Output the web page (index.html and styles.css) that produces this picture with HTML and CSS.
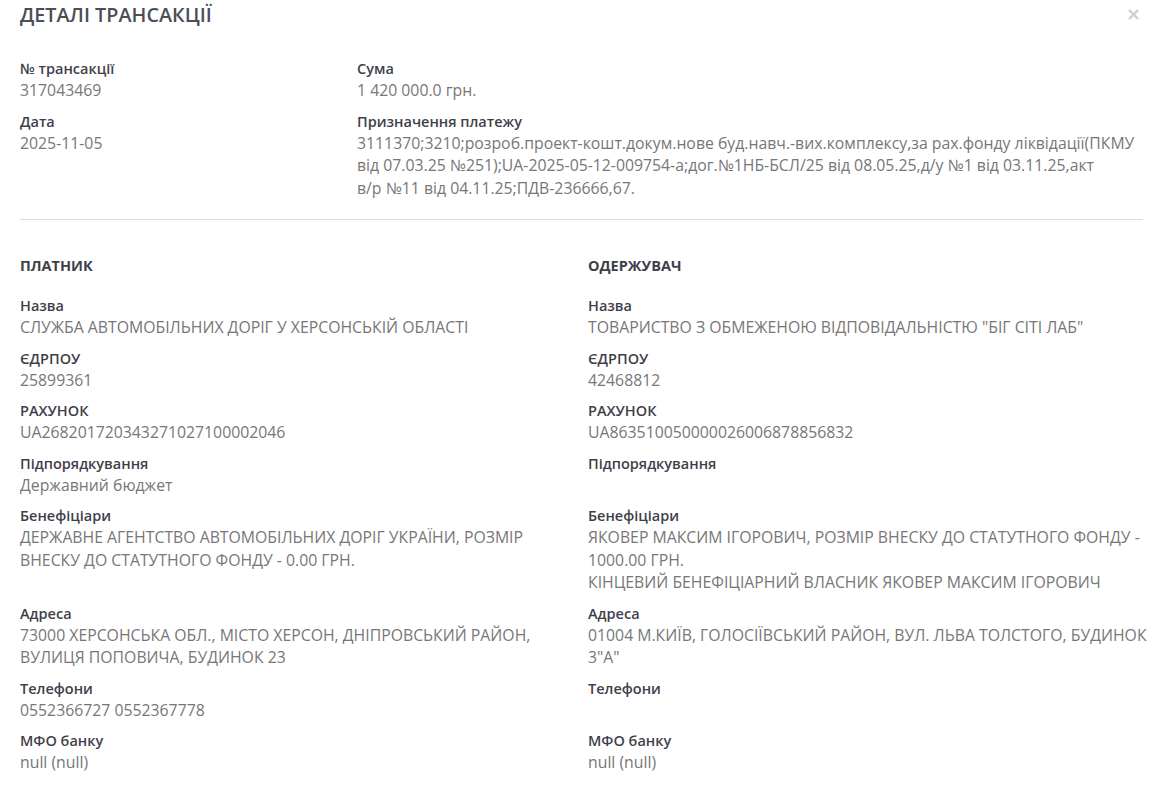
FILE: index.html
```html
<!DOCTYPE html>
<html lang="uk">
  <head>
    <meta charset="UTF-8" />
    <title>Деталі трансакції</title>
    <link rel="stylesheet" href="styles.css">
  </head>
  <body>
    <div class="modal">
      <div class="modal-header">
        <h2>Деталі трансакції</h2>
        <button class="close" type="button">&times;</button>
      </div>

      <!-- main info -->
      <div class="summary">
        <div class="col">
          <div class="field">
            <div class="label">№ трансакції</div>
            <div class="value">317043469</div>
          </div>
          <div class="field">
            <div class="label">Дата</div>
            <div class="value">2025-11-05</div>
          </div>
        </div>
        <div class="col">
          <div class="field">
            <div class="label">Сума</div>
            <div class="value">1 420 000.0 грн.</div>
          </div>
          <div class="field">
            <div class="label">Призначення платежу</div>
            <div class="value">3111370;3210;розроб.проект-кошт.докум.нове буд.навч.-вих.комплексу,за рах.фонду ліквідації(ПКМУ від 07.03.25 №251);UA-2025-05-12-009754-a;дог.№1НБ-БСЛ/25 від 08.05.25,д/у №1 від 03.11.25,акт<br>в/р №11 від 04.11.25;ПДВ-236666,67.</div>
          </div>
        </div>
      </div>

      <hr class="divider">

      <!-- payer / recipient, row by row -->
      <div class="parties">
        <h3 class="party-title">Платник</h3>
        <h3 class="party-title">Одержувач</h3>

        <div class="field">
          <div class="label">Назва</div>
          <div class="value">СЛУЖБА АВТОМОБІЛЬНИХ ДОРІГ У ХЕРСОНСЬКІЙ ОБЛАСТІ</div>
        </div>
        <div class="field">
          <div class="label">Назва</div>
          <div class="value">ТОВАРИСТВО З ОБМЕЖЕНОЮ ВІДПОВІДАЛЬНІСТЮ "БІГ СІТІ ЛАБ"</div>
        </div>

        <div class="field">
          <div class="label">ЄДРПОУ</div>
          <div class="value">25899361</div>
        </div>
        <div class="field">
          <div class="label">ЄДРПОУ</div>
          <div class="value">42468812</div>
        </div>

        <div class="field">
          <div class="label">РАХУНОК</div>
          <div class="value">UA268201720343271027100002046</div>
        </div>
        <div class="field">
          <div class="label">РАХУНОК</div>
          <div class="value">UA863510050000026006878856832</div>
        </div>

        <div class="field">
          <div class="label">Підпорядкування</div>
          <div class="value">Державний бюджет</div>
        </div>
        <div class="field">
          <div class="label">Підпорядкування</div>
          <div class="value"></div>
        </div>

        <div class="field">
          <div class="label">Бенефіціари</div>
          <div class="value">ДЕРЖАВНЕ АГЕНТСТВО АВТОМОБІЛЬНИХ ДОРІГ УКРАЇНИ, РОЗМІР ВНЕСКУ ДО СТАТУТНОГО ФОНДУ - 0.00 ГРН.</div>
        </div>
        <div class="field">
          <div class="label">Бенефіціари</div>
          <div class="value">ЯКОВЕР МАКСИМ ІГОРОВИЧ, РОЗМІР ВНЕСКУ ДО СТАТУТНОГО ФОНДУ - 1000.00 ГРН.<br>КІНЦЕВИЙ БЕНЕФІЦІАРНИЙ ВЛАСНИК ЯКОВЕР МАКСИМ ІГОРОВИЧ</div>
        </div>

        <div class="field">
          <div class="label">Адреса</div>
          <div class="value">73000 ХЕРСОНСЬКА ОБЛ., МІСТО ХЕРСОН, ДНІПРОВСЬКИЙ РАЙОН, ВУЛИЦЯ ПОПОВИЧА, БУДИНОК 23</div>
        </div>
        <div class="field">
          <div class="label">Адреса</div>
          <div class="value">01004 М.КИЇВ, ГОЛОСІЇВСЬКИЙ РАЙОН, ВУЛ. ЛЬВА ТОЛСТОГО, БУДИНОК 3"А"</div>
        </div>

        <div class="field">
          <div class="label">Телефони</div>
          <div class="value">0552366727 0552367778</div>
        </div>
        <div class="field">
          <div class="label">Телефони</div>
          <div class="value"></div>
        </div>

        <div class="field">
          <div class="label">МФО банку</div>
          <div class="value">null (null)</div>
        </div>
        <div class="field">
          <div class="label">МФО банку</div>
          <div class="value">null (null)</div>
        </div>
      </div>
    </div>
  </body>
</html>
```

FILE: styles.css
```css
* {
  margin: 0;
  padding: 0;
  box-sizing: border-box;
}

body {
  background: #fff;
  font-family: "Open Sans", "Noto Sans", Arial, sans-serif;
  font-size: 15.8px;
  color: #777;
}

.modal {
  padding: 3px 20px 20px 20px;
}

.modal-header {
  display: flex;
  justify-content: space-between;
  align-items: flex-start;
  height: 56px;
}

.modal-header h2 {
  font-size: 19.8px;
  font-weight: 600;
  line-height: 24px;
  text-transform: uppercase;
  color: #4d4d57;
}

.close {
  border: none;
  background: none;
  color: #cfcfcf;
  font-family: "DejaVu Sans", sans-serif;
  font-size: 18px;
  font-weight: 700;
  line-height: 22px;
  margin-right: 7px;
  cursor: pointer;
}

.summary {
  display: grid;
  grid-template-columns: 337px 1fr;
  margin-right: 5px;
}

.field {
  margin-bottom: 10px;
}

.label {
  font-size: 14.5px;
  font-weight: 600;
  line-height: 20px;
  color: #3f3f4b;
}

.value {
  line-height: 22.5px;
  min-height: 22.5px;
  color: #777;
}

.divider {
  border: none;
  border-top: 1px solid #ddd;
  margin: 10px 5px 0 0;
}

.parties {
  display: grid;
  grid-template-columns: 548px 1fr;
  column-gap: 20px;
  padding-top: 36px;
}

.party-title {
  font-size: 14.5px;
  font-weight: 700;
  line-height: 20px;
  color: #3f3f4b;
  text-transform: uppercase;
  margin-bottom: 20px;
}
```
